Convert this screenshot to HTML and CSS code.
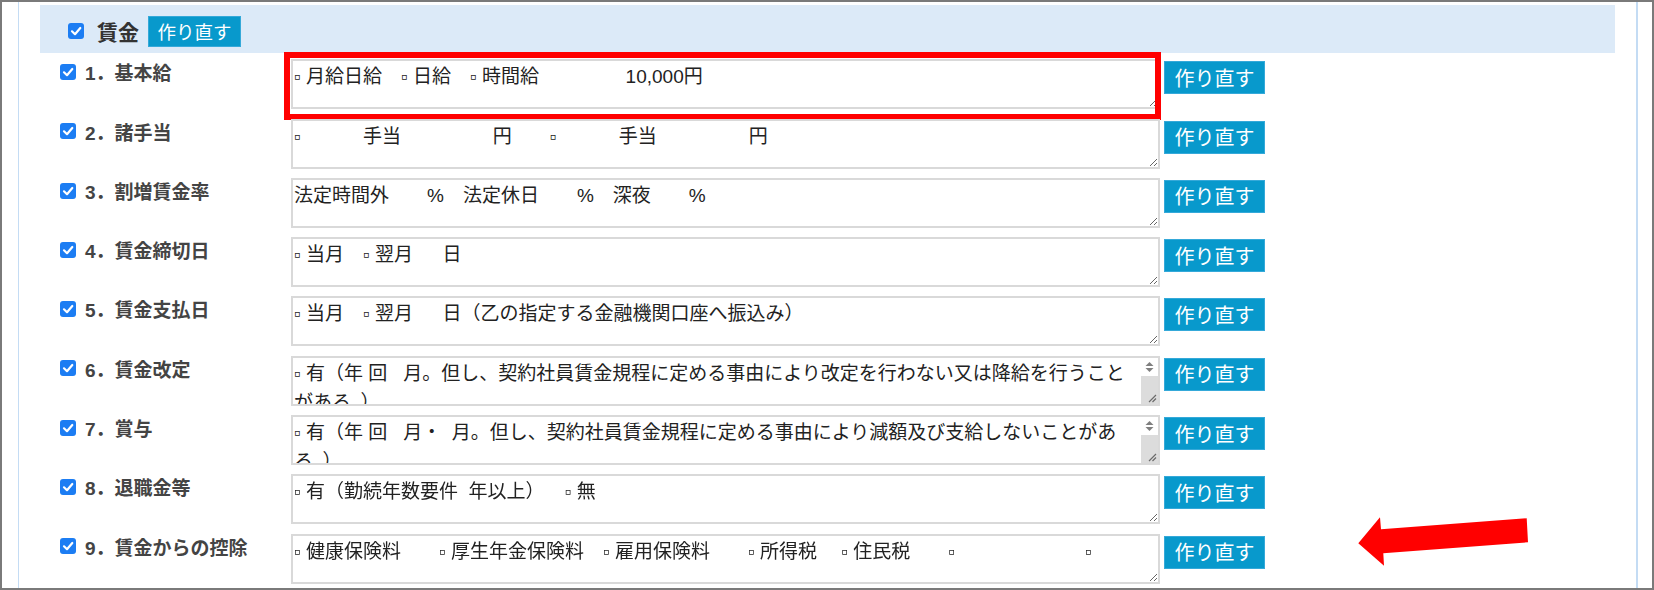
FILE: index.html
```html
<!DOCTYPE html>
<html lang="ja">
<head>
    <meta charset="UTF-8">
    <meta name="viewport" content="width=device-width, initial-scale=1.0">
    <title>賃金</title>
    <link rel="stylesheet" href="styles.css">
</head>
<body>
    <div class="screen">
        <div class="panel">
            <div class="section-head">
                <span class="check"><svg viewBox="0 0 16 16"><rect width="16" height="16" rx="3"/><polyline points="4,8.3 7,11.2 12.3,5"/></svg></span>
                <span class="section-title">賃金</span>
                <button class="redo redo-head">作り直す</button>
            </div>
            <div class="rows">
                <div class="row">
                    <span class="check"><svg viewBox="0 0 16 16"><rect width="16" height="16" rx="3"/><polyline points="4,8.3 7,11.2 12.3,5"/></svg></span>
                    <span class="item-label">1．基本給</span>
                    <div class="field">
                        <textarea>▫ 月給日給　▫ 日給　▫ 時間給　　　　  10,000円</textarea>
                        <div class="mark"></div>
                    </div>
                    <button class="redo">作り直す</button>
                </div>
                <div class="row">
                    <span class="check"><svg viewBox="0 0 16 16"><rect width="16" height="16" rx="3"/><polyline points="4,8.3 7,11.2 12.3,5"/></svg></span>
                    <span class="item-label">2．諸手当</span>
                    <div class="field">
                        <textarea>▫ 　　　手当　　　　   円　　▫ 　　　手当　　　　   円</textarea>
                    </div>
                    <button class="redo">作り直す</button>
                </div>
                <div class="row">
                    <span class="check"><svg viewBox="0 0 16 16"><rect width="16" height="16" rx="3"/><polyline points="4,8.3 7,11.2 12.3,5"/></svg></span>
                    <span class="item-label">3．割増賃金率</span>
                    <div class="field">
                        <textarea>法定時間外　　%　法定休日　　%　深夜　　%</textarea>
                    </div>
                    <button class="redo">作り直す</button>
                </div>
                <div class="row">
                    <span class="check"><svg viewBox="0 0 16 16"><rect width="16" height="16" rx="3"/><polyline points="4,8.3 7,11.2 12.3,5"/></svg></span>
                    <span class="item-label">4．賃金締切日</span>
                    <div class="field">
                        <textarea>▫ 当月　▫ 翌月　  日</textarea>
                    </div>
                    <button class="redo">作り直す</button>
                </div>
                <div class="row">
                    <span class="check"><svg viewBox="0 0 16 16"><rect width="16" height="16" rx="3"/><polyline points="4,8.3 7,11.2 12.3,5"/></svg></span>
                    <span class="item-label">5．賃金支払日</span>
                    <div class="field">
                        <textarea>▫ 当月　▫ 翌月　  日（乙の指定する金融機関口座へ振込み）</textarea>
                    </div>
                    <button class="redo">作り直す</button>
                </div>
                <div class="row">
                    <span class="check"><svg viewBox="0 0 16 16"><rect width="16" height="16" rx="3"/><polyline points="4,8.3 7,11.2 12.3,5"/></svg></span>
                    <span class="item-label">6．賃金改定</span>
                    <div class="field">
                        <textarea>▫ 有（年 回   月。但し、契約社員賃金規程に定める事由により改定を行わない又は降給を行うこと
がある。）</textarea>
                        <div class="vbar"><svg viewBox="0 0 17 46"><rect class="vbar-track" y="18" width="17" height="28"/><polygon points="4.5,8 8.5,4 12.5,8"/><polygon points="4.5,10 12.5,10 8.5,14"/><path d="M8 44 L15 37 M11.5 44 L15 40.5"/></svg></div>
                    </div>
                    <button class="redo">作り直す</button>
                </div>
                <div class="row">
                    <span class="check"><svg viewBox="0 0 16 16"><rect width="16" height="16" rx="3"/><polyline points="4,8.3 7,11.2 12.3,5"/></svg></span>
                    <span class="item-label">7．賞与</span>
                    <div class="field">
                        <textarea>▫ 有（年 回   月・  月。但し、契約社員賃金規程に定める事由により減額及び支給しないことがあ
る。）</textarea>
                        <div class="vbar"><svg viewBox="0 0 17 46"><rect class="vbar-track" y="18" width="17" height="28"/><polygon points="4.5,8 8.5,4 12.5,8"/><polygon points="4.5,10 12.5,10 8.5,14"/><path d="M8 44 L15 37 M11.5 44 L15 40.5"/></svg></div>
                    </div>
                    <button class="redo">作り直す</button>
                </div>
                <div class="row">
                    <span class="check"><svg viewBox="0 0 16 16"><rect width="16" height="16" rx="3"/><polyline points="4,8.3 7,11.2 12.3,5"/></svg></span>
                    <span class="item-label">8．退職金等</span>
                    <div class="field">
                        <textarea>▫ 有（勤続年数要件  年以上）　  ▫ 無</textarea>
                    </div>
                    <button class="redo">作り直す</button>
                </div>
                <div class="row">
                    <span class="check"><svg viewBox="0 0 16 16"><rect width="16" height="16" rx="3"/><polyline points="4,8.3 7,11.2 12.3,5"/></svg></span>
                    <span class="item-label">9．賃金からの控除</span>
                    <div class="field">
                        <textarea>▫ 健康保険料　　▫ 厚生年金保険料　▫ 雇用保険料　　▫ 所得税　 ▫ 住民税　　▫ 　　　　　　  ▫ </textarea>
                    </div>
                    <button class="redo">作り直す</button>
                </div>
            </div>
        </div>
        <!-- annotation arrow -->
        <svg class="arrow" viewBox="0 0 185 62"><polygon points="8.3,33.3 30,7.3 31,19.3 176.7,8.3 178,32.3 33.3,43.3 34,55.7"/></svg>
    </div>
</body>
</html>
```

FILE: styles.css
```css
body {
    margin: 0;
    font-family: "Liberation Sans", "Noto Sans CJK JP", sans-serif;
    background-color: #ffffff;
}
.screen {
    position: relative;
    width: 1654px;
    height: 590px;
    box-sizing: border-box;
    border: 2px solid #7a7a7a;
    overflow: hidden;
    background-color: #ffffff;
}
.panel {
    box-sizing: border-box;
    width: 1620px;
    height: 100%;
    margin-left: 16px;
    border-left: 1px solid #c4dcf4;
    border-right: 2px solid #c4dcf4;
    padding: 3px 21px 0;
}
.section-head {
    display: flex;
    align-items: center;
    box-sizing: border-box;
    height: 48px;
    padding: 4px 0 0 28px;
    background-color: #dceaf8;
}
.section-head .check {
    margin-right: 13px;
}
.section-title {
    font-size: 21px;
    font-weight: bold;
    color: #333333;
    margin-right: 9px;
}
.check {
    display: block;
    flex: none;
    width: 16px;
    height: 16px;
}
.check svg {
    display: block;
    width: 16px;
    height: 16px;
}
.check rect {
    fill: #1c7df3;
}
.check polyline {
    fill: none;
    stroke: #ffffff;
    stroke-width: 2.2;
    stroke-linecap: round;
    stroke-linejoin: round;
}
.rows {
    display: flex;
    flex-direction: column;
    gap: 9.3px;
    margin-top: 6.3px;
    padding-left: 20px;
}
.row {
    display: flex;
    align-items: flex-start;
}
.row .check {
    margin-top: 4.7px;
    margin-right: 9px;
}
.item-label {
    flex: none;
    width: 206px;
    padding-top: 2px;
    font-size: 19px;
    font-weight: bold;
    line-height: 25px;
    color: #444444;
}
.field {
    position: relative;
    flex: none;
}
.field textarea {
    display: block;
    box-sizing: border-box;
    width: 869px;
    height: 50px;
    margin: 0;
    padding: 1px 1px 0;
    border: 2px solid #d9d9d9;
    font-family: "Liberation Sans", "Noto Sans CJK JP", sans-serif;
    font-size: 19px;
    line-height: 29px;
    color: #222222;
    background-color: #ffffff;
}
/* scrollbar of the two textareas whose text overflows */
.vbar {
    position: absolute;
    top: 2px;
    right: 2px;
    width: 17px;
    height: 46px;
    background-color: #ffffff;
}
.vbar svg {
    display: block;
    width: 17px;
    height: 46px;
}
.vbar-track {
    fill: #dcdcdc;
}
.vbar polygon {
    fill: #7f7f7f;
}
.vbar path {
    fill: none;
    stroke: #6a6a6a;
    stroke-width: 1.2;
}
.mark {
    position: absolute;
    top: -7px;
    left: -7px;
    right: -1px;
    bottom: -11px;
    border: 6px solid #ff0000;
    pointer-events: none;
}
.redo {
    flex: none;
    width: 101px;
    height: 33px;
    margin: 2px 0 0 4px;
    padding: 0;
    border: 1px solid #35a9d9;
    background-color: #0899cc;
    color: #ffffff;
    font-family: "Noto Sans CJK JP", sans-serif;
    font-size: 20px;
    line-height: 1;
}
.redo-head {
    width: 93px;
    height: 31px;
    margin: 0;
    font-size: 18.5px;
}
.arrow {
    position: absolute;
    left: 1348px;
    top: 508px;
    width: 185px;
    height: 62px;
}
.arrow polygon {
    fill: #ff0000;
}
```
